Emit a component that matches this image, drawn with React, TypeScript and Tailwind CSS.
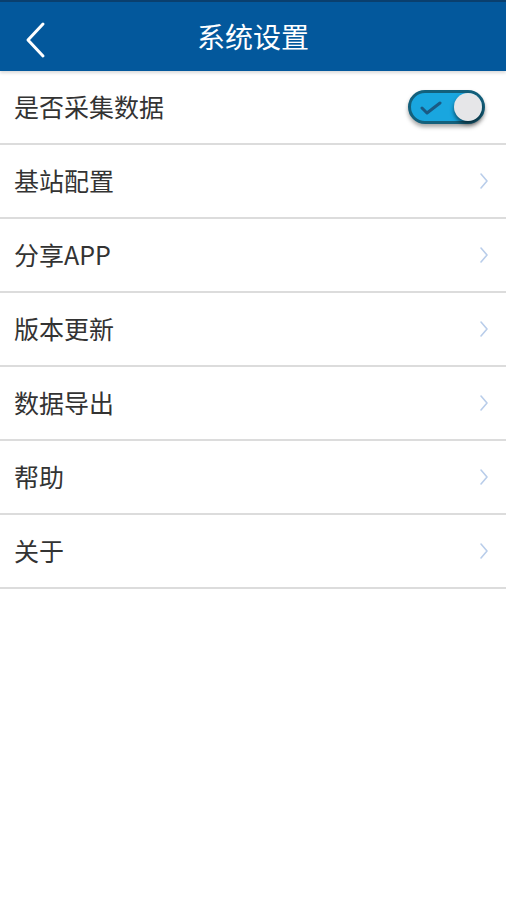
const items = ['基站配置', '分享APP', '版本更新', '数据导出', '帮助', '关于'];

const font = { fontFamily: '"Noto Sans CJK SC", "Noto Sans", sans-serif' };

function Chevron() {
  return (
    <svg width="10" height="18" viewBox="0 0 10 18" fill="none">
      <path d="M2 2l6 7-6 7" stroke="#b9cdea" strokeWidth="1.6" strokeLinecap="round" strokeLinejoin="round" />
    </svg>
  );
}

function Toggle() {
  return (
    <div className="relative w-[77px] h-[34px] rounded-full bg-[#19a6df] border-[3px] border-[#13607c] shadow-[0_3px_4px_rgba(0,0,0,0.35)]">
      <svg className="absolute left-[9px] top-[8px]" width="24" height="14" viewBox="0 0 24 14" fill="none">
        <path d="M2 7l5 5L20 2" stroke="#1a5a84" strokeWidth="3" strokeLinecap="round" strokeLinejoin="round" />
      </svg>
      <div className="absolute right-[0px] top-[0px] w-[28px] h-[28px] rounded-full bg-[#e6e6e8] shadow-[0_3px_4px_rgba(0,0,0,0.55)]" />
    </div>
  );
}

export default function App() {
  return (
    <div className="w-[506px] h-[900px] bg-white" style={font}>
      {/* Header */}
      <div className="relative h-[71px] bg-[#03589c] border-t-2 border-[#0a3f6e] flex items-center justify-center shadow-[0_2px_3px_rgba(0,0,0,0.15)]">
        <svg className="absolute left-[24px] top-[19px]" width="24" height="38" viewBox="0 0 24 38" fill="none">
          <path d="M19 3L4 19l15 16" stroke="white" strokeWidth="3" strokeLinecap="round" strokeLinejoin="round" />
        </svg>
        <span className="text-white text-[28px] leading-none -mt-[2px]">系统设置</span>
      </div>

      {/* First row with toggle */}
      <div className="h-[74px] flex items-center justify-between pl-[14px] pr-[21px] border-b-2 border-[#dcdcdc]">
        <span className="text-[25px] text-[#333333]">是否采集数据</span>
        <Toggle />
      </div>

      {items.map((t) => (
        <div key={t} className="h-[74px] flex items-center justify-between pl-[14px] pr-[17px] border-b-2 border-[#dcdcdc]">
          <span className="text-[25px] text-[#333333]">{t}</span>
          <Chevron />
        </div>
      ))}
    </div>
  );
}
